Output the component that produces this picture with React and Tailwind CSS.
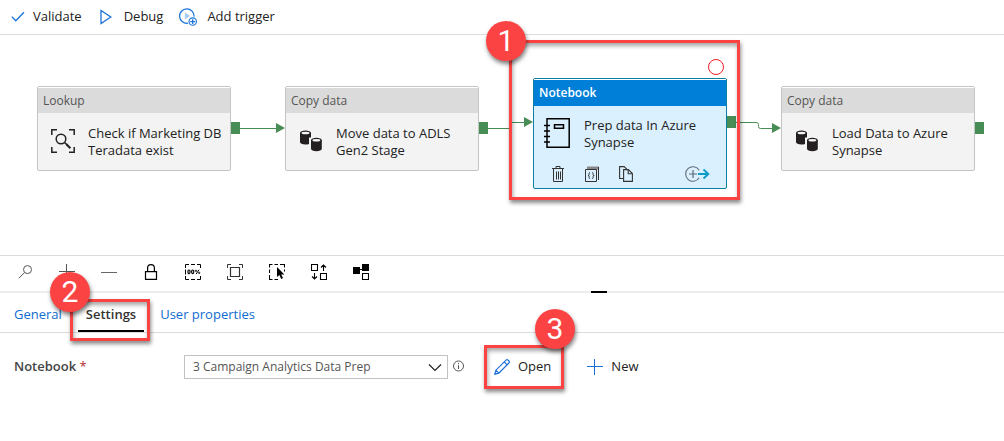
import React from "react";

const Stroke = ({ children, className = "size-4", box = "0 0 16 16", width = 1 }) => (
  <svg className={className} viewBox={box} fill="none" stroke="currentColor" strokeWidth={width} aria-hidden="true">
    {children}
  </svg>
);

const CheckIcon = () => (
  <Stroke className="h-4 w-3.5 text-[#1a73d9]" box="0 0 14 16" width={1.3}>
    <path d="M.8 7.6 4.8 11.8 13 3.2" />
  </Stroke>
);

const PlayIcon = () => (
  <Stroke className="h-4 w-3 text-[#1a73d9]" box="0 0 12 16" width={1.3}>
    <path d="M1 1.4V14.6L10.8 8Z" />
  </Stroke>
);

const TriggerIcon = () => (
  <Stroke className="size-[18px] text-[#1a73d9]" box="0 0 18 18" width={1.3}>
    <path d="M9 15.200A7.200 7.200 0 1 1 15 8.600" />
    <path d="M5.800 4.200v7.400L11 7.900Z" fill="#a9cdf2" stroke="none" />
    <circle cx="13.700" cy="13.600" r="3.700" strokeWidth="1.100" />
    <path d="M13.700 11.200v4.800M11.300 13.600h4.800" />
  </Stroke>
);

const LookupIcon = () => (
  <Stroke className="size-6 text-[#222]" box="0 0 24 24" width={1.5}>
    <path d="M.8 6V.8H6M18 .8h5.2V6M.8 18v5.2H6M18 23.2h5.2V18" />
    <circle cx="10" cy="10" r="4.8" />
    <path d="m13.5 13.5 2.6 2.4" />
    <path d="m15.400 15.200 4 4" strokeWidth="2" />
  </Stroke>
);

const DatabasesIcon = () => (
  <svg className="mx-px h-6 w-[22px]" viewBox="0 0 22 24" aria-hidden="true">
    <path d="M0 4v9c0 1.400 2.400 2.400 5.400 2.400 1.400 0 2.500-.1 3.600-.5V8.600h2V4Z" fill="#231f20" />
    <ellipse cx="5.500" cy="4" rx="5.500" ry="2.500" fill="#231f20" />
    <ellipse cx="5.500" cy="4" rx="4" ry="1.300" fill="#f3f3f3" />
    <path d="M11 11.200v8.600c0 1.400 2.400 2.400 5.400 2.400s5.400-1 5.400-2.400v-8.600Z" fill="#231f20" />
    <ellipse cx="16.400" cy="11.200" rx="5.400" ry="2.500" fill="#231f20" />
    <ellipse cx="16.400" cy="11.200" rx="4" ry="1.300" fill="#f3f3f3" />
  </svg>
);

const NotebookIcon = () => (
  <Stroke className="h-[30px] w-[26px] text-black" box="0 0 26 30" width={1.5}>
    <path d="M3 .8h22.200v28.400H3Z" />
    <path d="M0 7.500h6M0 13h6M0 18.500h6M0 24h6" />
    <path d="M10.500 6.800h9v3.500h-9Z" />
  </Stroke>
);

const TrashIcon = () => (
  <Stroke className="h-4 w-3 text-[#333]" box="0 0 12 16" width={1}>
    <path d="M0 2.500h12M4 2.500v-2h4v2M1.500 3v12.500h9V3M4.500 5.500v8M6.500 5.500v8M8.500 5.500v8" />
  </Stroke>
);

const CodeIcon = () => (
  <Stroke className="h-4 w-3.5 text-[#333]" box="0 0 14 16" width={1}>
    <path d="M2 .5h12v3H2Z" fill="#888" stroke="none" />
    <path d="M13.500 1V14M.5 3.500h11v12H.5Z" />
    <path d="M5 6.500c-1.200 0-.8 1-.9 2 0 .8-.5 1-1.100 1 .6 0 1.100.2 1.100 1 .1 1-.3 2 .9 2M7.200 6.500c1.200 0 .8 1 .9 2 0 .8.5 1 1.100 1-.6 0-1.100.2-1.100 1-.1 1 .3 2-.9 2" />
  </Stroke>
);

const CopyIcon = () => (
  <Stroke className="h-4 w-3.5 text-[#333]" box="0 0 14 16" width={1.1}>
    <path d="M4 12.500H.6V.6h4.600l3 3M4.600 3.600h4.800l4 4v7.800H4.600Z" />
    <path d="M9.200 3.800v4h4" />
  </Stroke>
);

const AddOutputIcon = () => (
  <svg className="h-4 w-[25px]" viewBox="0 0 25 16" fill="none" aria-hidden="true">
    <path d="M14.200 4.200A7.300 7.300 0 1 0 14.200 11.800" stroke="#5c6b75" strokeWidth="1.100" />
    <path d="M8 4v8M4 8h8" stroke="#5c6b75" strokeWidth="1.200" />
    <path d="M13 8h10M18.500 3.500 23.300 8l-4.800 4.500" stroke="#0c9bc5" strokeWidth="1.900" />
  </svg>
);

const canvasTools = [
  { name: "Search", icon: <Stroke className="size-4 text-[#555]"><circle cx="10.500" cy="5.600" r="4" /><path d="m7.600 8.500-5.800 5.800" /></Stroke> },
  { name: "Zoom in", icon: <Stroke className="size-4 text-[#555]"><path d="M0 7.500h16M7.500 0v15" /></Stroke> },
  { name: "Zoom out", icon: <Stroke className="size-4 text-[#666]"><path d="M0 8.500h16" /></Stroke> },
  { name: "Lock", icon: <Stroke className="size-4 text-black" width={1.200}><path d="M2.500 7.600h11v7.800h-11ZM4.600 7.600V4a3.400 3.400 0 0 1 6.800 0v3.600" /></Stroke> },
  {
    name: "Zoom to 100%",
    icon: (
      <Stroke className="size-4 text-black" width={1}>
        <path d="M.5 4V.5H4M6 .5h4M12 .5h3.500V4M.5 12v3.500H4M6 15.500h4M12 15.500h3.500V12M.5 5.500v5" />
        <ellipse cx="4" cy="7.800" rx="1.100" ry="1.800" strokeWidth="1.200" />
        <ellipse cx="7.700" cy="7.800" rx="1.100" ry="1.800" strokeWidth="1.200" />
        <path d="m14 5.700-2.800 4.300" />
        <circle cx="11" cy="6.800" r=".7" strokeWidth=".9" />
        <circle cx="14.200" cy="8.900" r=".7" strokeWidth=".9" />
      </Stroke>
    ),
  },
  { name: "Zoom to fit", icon: <Stroke className="size-4 text-[#333]"><path d="M.5 4V.5H4M12 .5h3.500V4M.5 12v3.500H4M12 15.500h3.500V12" /><path d="M3.500 3.500h9v9h-9Z" strokeWidth="1.200" /></Stroke> },
  {
    name: "Select",
    icon: (
      <Stroke className="size-4 text-black" width={1.100}>
        <path d="M.5 3.500v-3h3M5.500.5h3.500M11 .5h4.500v3M.5 5.500V9M.5 11v4.500h3M5.500 15.500H9M15.500 5.500v2" />
        <path d="M8 3v10l2.400-2 1.800 4 1.800-.9-1.800-3.700h3.200Z" fill="currentColor" stroke="none" />
      </Stroke>
    ),
  },
  { name: "Auto align", icon: <Stroke className="size-4 text-black" width={1.100}><path d="M.5.500h6v6h-6ZM9.500 9.500h6v6h-6ZM12.500 7V1M10 3.500 12.500 1 15 3.500M3.500 9v6M1 12.500 3.500 15 6 12.500" /></Stroke> },
  {
    name: "Lineage",
    icon: (
      <Stroke className="size-4 text-black" width={1.100}>
        <path d="M0 3h7v7H0ZM9 0h7v7H9Z" fill="currentColor" stroke="none" />
        <path d="M7 5.500h2M9.500 9.500h6v6h-6Z" />
      </Stroke>
    ),
  },
];

const Activity = ({ kind, title, icon, className }) => (
  <article className={`absolute h-[85px] w-[194px] rounded-xs border border-[#c4c4c4] bg-[#f3f3f3] ${className}`}>
    <h2 className="flex h-[26px] items-center border-t border-white bg-[#dbdbdb] px-[5px] text-xs text-[#555]">{kind}</h2>
    <div className="flex pt-3">
      <div className="flex w-[50px] shrink-0 justify-center pt-1">{icon}</div>
      <p className="text-[13px] leading-[17px] text-[#222]">{title}</p>
    </div>
  </article>
);

const Badge = ({ children, className }) => (
  <span className={`absolute z-20 flex size-10 items-center justify-center rounded-full bg-[#fc4343] font-[Roboto,sans-serif] text-3xl font-normal text-white shadow-[1px_3px_4px_rgba(0,0,0,0.5)] ${className}`}>
    {children}
  </span>
);

const Highlight = ({ className }) => (
  <span className={`pointer-events-none absolute z-10 border-3 border-[#fc4343] shadow-[1px_3px_4px_rgba(0,0,0,0.45),inset_1px_3px_4px_rgba(0,0,0,0.35)] ${className}`} />
);

export default function App() {
  return (
    <div className="overflow-x-hidden bg-white font-['Open_Sans','Noto_Sans',sans-serif] text-[13px] text-[#222]">
      <header className="flex h-[35px] items-center border-b border-[#dcdcdc] pl-[11px]">
        <button className="flex items-center gap-2"><CheckIcon />Validate</button>
        <button className="ml-[18px] flex items-center gap-3"><PlayIcon />Debug</button>
        <button className="ml-4 flex items-center gap-2.5"><TriggerIcon />Add trigger</button>
      </header>

      <main className="relative h-[220px] overflow-hidden">
        <svg className="absolute inset-0 size-full" fill="#488d55" stroke="none" aria-hidden="true">
          <path d="M231 87h9v12h-9ZM479 87h9v12h-9ZM727 81h9v12h-9ZM975 87h9v12h-9Z" />
          <path d="M276 88l9 5-9 5ZM524 82l9 5-9 5ZM772 88l9 5-9 5Z" />
          <path d="M240 93.500h36M488 93.500h22M510 87.500h14M736 87.500h20q2.500 0 2.500 2v2q0 2 2 2H772" fill="none" stroke="#488d55" />
        </svg>
        <Activity className="left-[37px] top-[51px]" kind="Lookup" icon={<LookupIcon />} title={<>Check if Marketing DB<br />Teradata exist</>} />
        <Activity className="left-[285px] top-[51px]" kind="Copy data" icon={<DatabasesIcon />} title={<>Move data to ADLS<br />Gen2 Stage</>} />
        <Activity className="left-[781px] top-[51px]" kind="Copy data" icon={<DatabasesIcon />} title={<>Load Data to Azure<br />Synapse</>} />

        <article className="absolute left-[533px] top-[43px] flex h-[111px] w-[194px] flex-col rounded-xs border border-[#0b7fa3] bg-[#dbf0fe]">
          <h2 className="flex h-[27px] items-center border-t border-white bg-[#007fd8] px-[5px] text-xs font-semibold text-white">Notebook</h2>
          <div className="flex pt-[11px]">
            <div className="flex w-[50px] shrink-0 justify-center pt-px pr-1"><NotebookIcon /></div>
            <p className="text-[13px] leading-[17px]">Prep data In Azure<br />Synapse</p>
          </div>
          <div className="mt-auto flex items-center pb-1.5 pl-[18px]">
            <button aria-label="Delete"><TrashIcon /></button>
            <button aria-label="View code" className="ml-[21px]"><CodeIcon /></button>
            <button aria-label="Clone" className="ml-5"><CopyIcon /></button>
            <button aria-label="Add output" className="ml-[52px]"><AddOutputIcon /></button>
          </div>
        </article>
        <span className="absolute left-[708px] top-6 size-4 rounded-full border border-[#f01c24]" />
        <Highlight className="left-[509px] top-[5px] h-[160px] w-[231px]" />
      </main>
      <Badge className="left-[486px] top-[21px]">1</Badge>

      <nav aria-label="Canvas tools" className="flex h-9 items-center gap-[26px] border-t border-[#dcdcdc] pb-1 pl-[17px]">
        {canvasTools.map((tool) => (
          <button key={tool.name} aria-label={tool.name}>{tool.icon}</button>
        ))}
      </nav>
      <div className="h-0.5 bg-[#ededed] pl-[591px]">
        <div className="h-0.5 w-4 bg-black" />
      </div>

      <div role="tablist" className="flex h-10 border-b border-[#dcdcdc] pl-1.5 text-[#0f6cd0]">
        <button role="tab" aria-selected="false" className="px-2 pt-1">General</button>
        <div className="relative ml-2 flex">
          <button role="tab" aria-selected="true" className="border-b-2 border-black px-2 pt-1.5 font-semibold text-[#333]">Settings</button>
          <Highlight className="-bottom-[9px] -left-2 -right-1.5 top-1.5" />
          <Badge className="-left-7 -top-[21px]">2</Badge>
        </div>
        <button role="tab" aria-selected="false" className="ml-2 px-2 pt-1">User properties</button>
      </div>

      <form className="flex items-center pb-16 pt-[22px] pl-3.5">
        <label htmlFor="notebook" className="w-[170px] font-semibold text-[#444]">
          Notebook <span className="font-normal text-[#b5282e]">*</span>
        </label>
        <div className="grid w-[264px] items-center">
          <select id="notebook" className="col-start-1 row-start-1 h-6 w-full appearance-none border border-[#c2c2c2] bg-white pl-2 text-xs text-[#555]">
            <option>3 Campaign Analytics Data Prep</option>
          </select>
          <Stroke className="pointer-events-none col-start-1 row-start-1 mr-1.5 h-4 w-3.5 justify-self-end text-[#222]" box="0 0 14 16" width={1.200}>
            <path d="m1 5.500 6 6 6-6" />
          </Stroke>
        </div>
        <Stroke className="ml-1 size-3.5 text-[#555]" box="0 0 14 14">
          <circle cx="6.500" cy="6" r="5" />
          <path d="M6.500 5.200v3.800M6.500 3v1.200" />
        </Stroke>
        <div className="relative ml-7">
          <button type="button" className="flex items-center gap-2">
            <Stroke className="size-4 text-[#1a6fd6]" width={1.200}>
              <path d="m.8 15.200 1.100-4L12 1.100q1-.9 2 0l.9.900q.9 1 0 2L4.800 14.100ZM10.200 2.900l2.900 2.900M1.900 11.200l2.900 2.900" />
            </Stroke>
            Open
          </button>
          <Highlight className="-bottom-3 -left-2.5 -right-[13px] -top-3" />
          <Badge className="-top-12 left-[41px]">3</Badge>
        </div>
        <button type="button" className="ml-9 flex items-center gap-2">
          <Stroke className="size-4 text-[#1a6fd6]"><path d="M0 7.500h16M7.500 0v16" /></Stroke>
          New
        </button>
      </form>
    </div>
  );
}
